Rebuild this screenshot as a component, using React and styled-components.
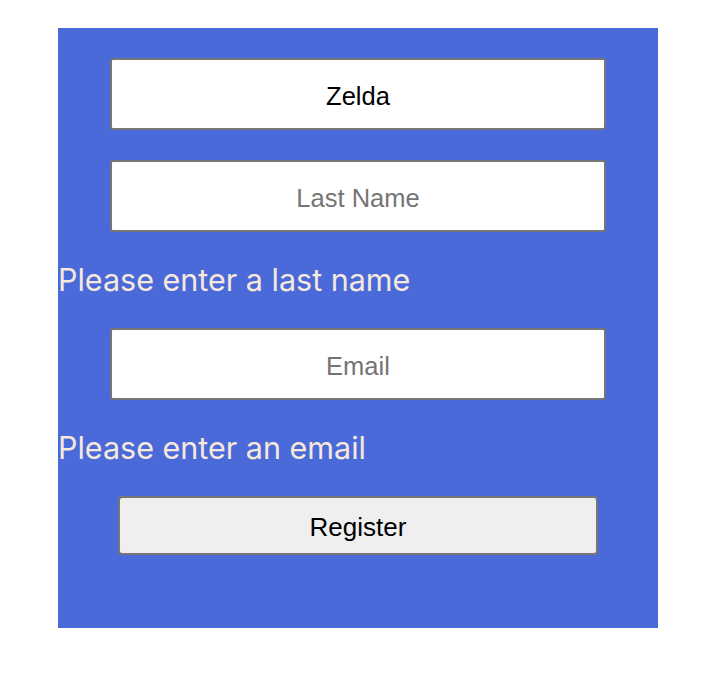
import React, {useState} from "react";
import styled, {createGlobalStyle} from "styled-components";

const GlobalStyle = createGlobalStyle`
    body {
        margin: 8px;
        background: white;
        font-family: "Liberation Sans", Arial, sans-serif;
    }
`;

const Wrapper = styled.div`
    display: flex;
    flex-direction: column;
    align-items: center;
    width: 600px;
    height: 600px;
    margin: 20px 50px;
    padding-top: 30px;
    box-sizing: border-box;
    background-color: #4a6ad9;
`;

const Field = styled.input`
    width: 496px;
    height: 72px;
    box-sizing: border-box;
    padding: 4px 2px 0 2px;
    border: 2px solid #767676;
    border-radius: 3px;
    background: white;
    font-family: "Liberation Sans", Arial, sans-serif;
    font-size: 25.5px;
    text-align: center;
    color: black;
    margin-bottom: ${props => props.gap}px;
    outline: none;

    &::placeholder {
        color: #757575;
    }
`;

const ErrorText = styled.div`
    align-self: stretch;
    font-family: Inter, "Open Sans", sans-serif;
    font-size: 30.5px;
    line-height: 36px;
    color: #f7e8dc;
    margin-bottom: 30px;
`;

const Button = styled.button`
    width: 480px;
    height: 59px;
    box-sizing: border-box;
    padding: 4px 6px 0 6px;
    border: 2px solid #767676;
    border-radius: 4px;
    background-color: #efefef;
    font-family: "Liberation Sans", Arial, sans-serif;
    font-size: 26px;
    color: black;
`;

const App = () => {
    const [firstName, setFirstName] = useState("Zelda");
    const [lastName, setLastName] = useState("");
    const [email, setEmail] = useState("");

    return (
        <>
            <GlobalStyle />
            <Wrapper>
                <Field value={firstName} onChange={e => setFirstName(e.target.value)} placeholder="First Name" gap={30} />
                <Field value={lastName} onChange={e => setLastName(e.target.value)} placeholder="Last Name" gap={30} />
                {!lastName && <ErrorText>Please enter a last name</ErrorText>}
                <Field value={email} onChange={e => setEmail(e.target.value)} placeholder="Email" gap={30} />
                {!email && <ErrorText>Please enter an email</ErrorText>}
                <Button>Register</Button>
            </Wrapper>
        </>
    )
};

export default App;
